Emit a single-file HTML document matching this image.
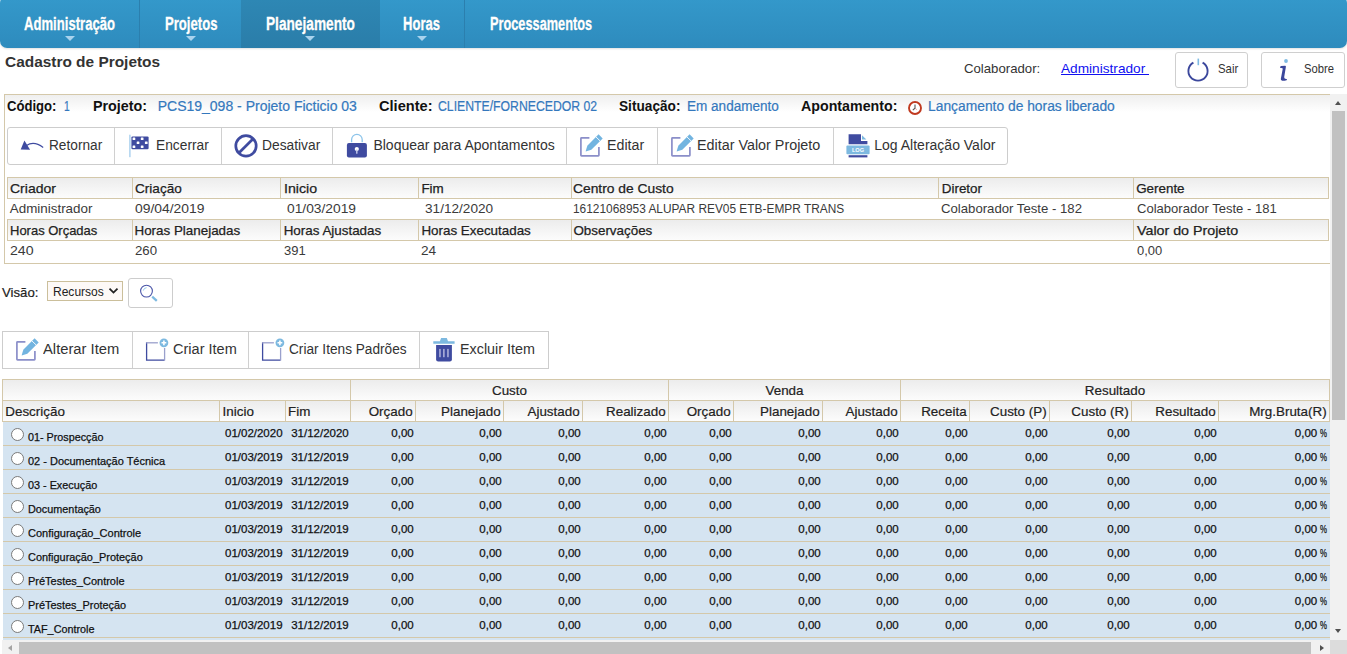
<!DOCTYPE html><html><head><meta charset="utf-8"><style>html,body{margin:0;padding:0;background:#fff;}body{width:1347px;height:654px;overflow:hidden;position:relative;font-family:"Liberation Sans",sans-serif;}</style></head><body><div style="position:absolute;left:0;top:-4px;width:1347px;height:52px;border-radius:7px;box-shadow:0 1px 2px rgba(0,0,0,.12);background:linear-gradient(#3499cb,#2e8bbd);overflow:hidden"><div style="position:absolute;left:241px;top:0;width:139px;height:56px;background:linear-gradient(#2e88b5,#2a7ca8)"></div><div style="position:absolute;left:139px;top:0;width:1px;height:56px;background:#2b7fae"></div><div style="position:absolute;left:464px;top:0;width:1px;height:56px;background:#2b7fae"></div></div>
<div style="position:absolute;left:65px;top:36px;width:0;height:0;border-left:5px solid transparent;border-right:5px solid transparent;border-top:5px solid #a9d3ee"></div>
<div style="position:absolute;left:186.4px;top:36px;width:0;height:0;border-left:5px solid transparent;border-right:5px solid transparent;border-top:5px solid #a9d3ee"></div>
<div style="position:absolute;left:304.8px;top:36px;width:0;height:0;border-left:5px solid transparent;border-right:5px solid transparent;border-top:5px solid #a9d3ee"></div>
<div style="position:absolute;left:416.8px;top:36px;width:0;height:0;border-left:5px solid transparent;border-right:5px solid transparent;border-top:5px solid #a9d3ee"></div>
<div style="position:absolute;left:1061px;top:74px;width:88px;height:1px;background:#1010f0"></div>
<div style="position:absolute;left:1175px;top:52px;width:73px;height:36px;border:1px solid #cfcfcf;border-radius:3px;box-sizing:border-box;background:#fff"></div>
<div style="position:absolute;left:1261px;top:52px;width:84px;height:36px;border:1px solid #cfcfcf;border-radius:3px;box-sizing:border-box;background:#fff"></div>
<svg style="position:absolute;left:1186px;top:57px" width="26" height="27" viewBox="0 0 26 27"><path d="M7.4 5.6 A9.6 9.6 0 1 0 16.6 5.6" fill="none" stroke="#3b479c" stroke-width="1.9"/><rect x="11.5" y="1.6" width="1.6" height="6.6" fill="#7fbbe3"/></svg>
<svg style="position:absolute;left:1274px;top:56px" width="18" height="28" viewBox="0 0 18 28"><circle cx="12" cy="5" r="1.9" fill="#7fbbe3"/><path d="M6 11.2 Q6.3 10 7 9.9 L11.1 9.7 Q12 9.9 11.9 10.8 L10.2 21 Q10.1 22.6 11.3 22.8 L13.1 23.2 L12.6 24.2 Q10 24.9 8.2 24.7 Q6.6 24.4 6.8 23 L8.8 12.4 Q7.5 11.8 6 11.8 Z" fill="#3b479c"/></svg>
<div style="position:absolute;left:4px;top:94px;width:1340px;height:170px;border:1px solid #d4c8aa;box-sizing:border-box"></div>
<div style="position:absolute;left:5px;top:95px;width:1325px;height:17px;background:linear-gradient(#efefef,#ffffff)"></div>
<svg style="position:absolute;left:906px;top:100px" width="18" height="17" viewBox="0 0 18 17"><circle cx="9" cy="8" r="6" fill="#fff" stroke="#c0391f" stroke-width="1.9"/><path d="M9 4.6 L9 8.2 L6.8 10.2" fill="none" stroke="#555" stroke-width="1.1"/><path d="M9.2 8.4 L10.8 9.6" fill="none" stroke="#e07060" stroke-width=".7"/></svg>
<div style="position:absolute;left:7px;top:127px;width:1001px;height:38px;border:1px solid #cdcdcd;border-radius:3px;box-sizing:border-box;background:#fff"></div>
<div style="position:absolute;left:114px;top:128px;width:1px;height:36px;background:#d0d0d0"></div>
<div style="position:absolute;left:221px;top:128px;width:1px;height:36px;background:#d0d0d0"></div>
<div style="position:absolute;left:332px;top:128px;width:1px;height:36px;background:#d0d0d0"></div>
<div style="position:absolute;left:566px;top:128px;width:1px;height:36px;background:#d0d0d0"></div>
<div style="position:absolute;left:657px;top:128px;width:1px;height:36px;background:#d0d0d0"></div>
<div style="position:absolute;left:833px;top:128px;width:1px;height:36px;background:#d0d0d0"></div>
<svg style="position:absolute;left:18px;top:138px" width="28" height="14" viewBox="0 0 28 14"><path d="M2.7 11.4 L6.4 2.4 L12.1 11.8 Z" fill="#3f4ba0"/><path d="M8.5 7.5 Q16 2.5 25.2 9.5" fill="none" stroke="#3f4ba0" stroke-width="1.1"/></svg>
<svg style="position:absolute;left:128px;top:134px" width="23" height="24" viewBox="0 0 23 24"><rect x="1.2" y="0.7" width="1.4" height="22.5" fill="#a9d0ee"/><rect x="3.4" y="2.4" width="17.2" height="12.8" rx="1.2" fill="#3f4ba0"/><rect x="4.6" y="3.4" width="2.7" height="2.7" rx="0.5" fill="#fff"/><rect x="12.8" y="3.4" width="2.7" height="2.7" rx="0.5" fill="#fff"/><rect x="8.7" y="7.4" width="2.7" height="2.7" rx="0.5" fill="#fff"/><rect x="16.9" y="7.4" width="2.7" height="2.7" rx="0.5" fill="#fff"/><rect x="4.6" y="11.4" width="2.7" height="2.7" rx="0.5" fill="#fff"/><rect x="12.8" y="11.4" width="2.7" height="2.7" rx="0.5" fill="#fff"/></svg>
<svg style="position:absolute;left:233px;top:133px" width="26" height="26" viewBox="0 0 26 26"><circle cx="13" cy="12.9" r="10.2" fill="none" stroke="#3f4ba0" stroke-width="2.7"/><path d="M19.9 6 L6.1 19.8" stroke="#3f4ba0" stroke-width="2.7"/></svg>
<svg style="position:absolute;left:345px;top:133px" width="24" height="26" viewBox="0 0 24 26"><path d="M6.6 9.2 L6.6 6.6 A5.3 5.3 0 0 1 17.2 6.6 L17.2 9.2" fill="none" stroke="#8cc4ea" stroke-width="1.3"/><rect x="1.9" y="9.9" width="20" height="14.7" rx="2" fill="#3f4ba0"/><circle cx="11.8" cy="16" r="2.1" fill="#fff"/><rect x="11.1" y="16.5" width="1.4" height="4.2" fill="#c5cbec"/></svg>
<svg style="position:absolute;left:575px;top:130px" width="30" height="30" viewBox="0 0 30 30"><path d="M14.4 7.9 L6.5 7.9 Q5.9 7.9 5.9 8.5 L5.9 25.3 Q5.9 25.9 6.5 25.9 L23.3 25.9 Q23.9 25.9 23.9 25.3 L23.9 17.1" fill="none" stroke="#8b8fc9" stroke-width="1.7"/><path d="M10.6 21.5 L12.3 15.7 L23.6 4.3 L27.7 8.4 L16.3 19.7 Z" fill="#72b4e0"/><path d="M20.9 6.9 L25.2 11.0" stroke="#fff" stroke-width="0.9"/></svg>
<svg style="position:absolute;left:665.5px;top:130px" width="30" height="30" viewBox="0 0 30 30"><path d="M14.4 7.9 L6.5 7.9 Q5.9 7.9 5.9 8.5 L5.9 25.3 Q5.9 25.9 6.5 25.9 L23.3 25.9 Q23.9 25.9 23.9 25.3 L23.9 17.1" fill="none" stroke="#8b8fc9" stroke-width="1.7"/><path d="M10.6 21.5 L12.3 15.7 L23.6 4.3 L27.7 8.4 L16.3 19.7 Z" fill="#72b4e0"/><path d="M20.9 6.9 L25.2 11.0" stroke="#fff" stroke-width="0.9"/></svg>
<svg style="position:absolute;left:845px;top:133px" width="26" height="26" viewBox="0 0 26 26"><path d="M3.6 1.2 L16 1.2 L16 7.9 L22.4 7.9 L22.4 11.2 L3.6 11.2 Z" fill="#3f4ba0"/><path d="M17 2.2 L21.4 6.5 L17 6.5 Z" fill="#7db9e0"/><rect x="1.4" y="12.4" width="23.2" height="8.8" rx="1" fill="#7db9e0"/><text x="13" y="19.3" font-family="Liberation Sans" font-weight="bold" font-size="5.6" fill="#fff" text-anchor="middle">LOG</text><rect x="3.6" y="22.2" width="18.8" height="2.2" fill="#3f4ba0"/></svg>
<div style="position:absolute;left:7px;top:177px;width:126px;height:22px;border:1px solid #d4c8aa;box-sizing:border-box;background:linear-gradient(#ececec,#fcfcfc)"></div>
<div style="position:absolute;left:132px;top:177px;width:149px;height:22px;border:1px solid #d4c8aa;box-sizing:border-box;background:linear-gradient(#ececec,#fcfcfc)"></div>
<div style="position:absolute;left:280px;top:177px;width:139px;height:22px;border:1px solid #d4c8aa;box-sizing:border-box;background:linear-gradient(#ececec,#fcfcfc)"></div>
<div style="position:absolute;left:418px;top:177px;width:154px;height:22px;border:1px solid #d4c8aa;box-sizing:border-box;background:linear-gradient(#ececec,#fcfcfc)"></div>
<div style="position:absolute;left:571px;top:177px;width:368px;height:22px;border:1px solid #d4c8aa;box-sizing:border-box;background:linear-gradient(#ececec,#fcfcfc)"></div>
<div style="position:absolute;left:938px;top:177px;width:196px;height:22px;border:1px solid #d4c8aa;box-sizing:border-box;background:linear-gradient(#ececec,#fcfcfc)"></div>
<div style="position:absolute;left:1133px;top:177px;width:196px;height:22px;border:1px solid #d4c8aa;box-sizing:border-box;background:linear-gradient(#ececec,#fcfcfc)"></div>
<div style="position:absolute;left:7px;top:219px;width:126px;height:22px;border:1px solid #d4c8aa;box-sizing:border-box;background:linear-gradient(#ececec,#fcfcfc)"></div>
<div style="position:absolute;left:132px;top:219px;width:149px;height:22px;border:1px solid #d4c8aa;box-sizing:border-box;background:linear-gradient(#ececec,#fcfcfc)"></div>
<div style="position:absolute;left:280px;top:219px;width:139px;height:22px;border:1px solid #d4c8aa;box-sizing:border-box;background:linear-gradient(#ececec,#fcfcfc)"></div>
<div style="position:absolute;left:418px;top:219px;width:154px;height:22px;border:1px solid #d4c8aa;box-sizing:border-box;background:linear-gradient(#ececec,#fcfcfc)"></div>
<div style="position:absolute;left:571px;top:219px;width:563px;height:22px;border:1px solid #d4c8aa;box-sizing:border-box;background:linear-gradient(#ececec,#fcfcfc)"></div>
<div style="position:absolute;left:1133px;top:219px;width:196px;height:22px;border:1px solid #d4c8aa;box-sizing:border-box;background:linear-gradient(#ececec,#fcfcfc)"></div>
<div style="position:absolute;left:47px;top:281px;width:76px;height:20px;border:1px solid #cbbf9b;box-sizing:border-box;background:#fdf9f7"></div>
<svg style="position:absolute;left:108px;top:287px" width="11" height="8" viewBox="0 0 11 8"><path d="M1.5 1.6 L5.5 5.6 L9.5 1.6" fill="none" stroke="#222" stroke-width="1.8"/></svg>
<div style="position:absolute;left:128px;top:278px;width:45px;height:30px;border:1px solid #cdcdcd;border-radius:3px;box-sizing:border-box;background:#fff"></div>
<svg style="position:absolute;left:136px;top:282px" width="26" height="24" viewBox="0 0 26 24"><circle cx="10.5" cy="9.1" r="5.9" fill="none" stroke="#4a55a8" stroke-width="1.1"/><path d="M7.3 8.6 A3.6 3.6 0 0 1 10.6 5.7" fill="none" stroke="#8cc4ea" stroke-width="0.9"/><path d="M16.2 14.6 L20.8 18.8" stroke="#7db9e0" stroke-width="2.3"/></svg>
<div style="position:absolute;left:2px;top:331px;width:547px;height:38px;border:1px solid #cdcdcd;box-sizing:border-box;background:#fff"></div>
<div style="position:absolute;left:132px;top:332px;width:1px;height:36px;background:#d0d0d0"></div>
<div style="position:absolute;left:248px;top:332px;width:1px;height:36px;background:#d0d0d0"></div>
<div style="position:absolute;left:419px;top:332px;width:1px;height:36px;background:#d0d0d0"></div>
<svg style="position:absolute;left:11px;top:334px" width="30" height="30" viewBox="0 0 30 30"><path d="M14.4 7.9 L6.5 7.9 Q5.9 7.9 5.9 8.5 L5.9 25.3 Q5.9 25.9 6.5 25.9 L23.3 25.9 Q23.9 25.9 23.9 25.3 L23.9 17.1" fill="none" stroke="#8b8fc9" stroke-width="1.7"/><path d="M10.6 21.5 L12.3 15.7 L23.6 4.3 L27.7 8.4 L16.3 19.7 Z" fill="#72b4e0"/><path d="M20.9 6.9 L25.2 11.0" stroke="#fff" stroke-width="0.9"/></svg>
<svg style="position:absolute;left:145px;top:338px" width="26" height="26" viewBox="0 0 26 26"><path d="M1.6 4.2 L1.6 22.2 L19.6 22.2" fill="none" stroke="#3f4ba0" stroke-width="1.3"/><path d="M1.0 4.8 L12.9 4.8" stroke="#9aa0cc" stroke-width="1.3"/><path d="M19.6 10 L19.6 22.5" fill="none" stroke="#9aa0cc" stroke-width="1.3"/><circle cx="18.9" cy="4.8" r="4.4" fill="#7db9e0"/><path d="M18.9 2.4 L18.9 7.2 M16.5 4.8 L21.3 4.8" stroke="#fff" stroke-width="1.6"/></svg>
<svg style="position:absolute;left:261px;top:338px" width="26" height="26" viewBox="0 0 26 26"><path d="M1.6 4.2 L1.6 22.2 L19.6 22.2" fill="none" stroke="#3f4ba0" stroke-width="1.3"/><path d="M1.0 4.8 L12.9 4.8" stroke="#9aa0cc" stroke-width="1.3"/><path d="M19.6 10 L19.6 22.5" fill="none" stroke="#9aa0cc" stroke-width="1.3"/><circle cx="18.9" cy="4.8" r="4.4" fill="#7db9e0"/><path d="M18.9 2.4 L18.9 7.2 M16.5 4.8 L21.3 4.8" stroke="#fff" stroke-width="1.6"/></svg>
<svg style="position:absolute;left:431px;top:336px" width="26" height="28" viewBox="0 0 26 28"><path d="M10.1 2.1 L15.8 2.1 L17 5.3 L23.6 5.3 L23.6 7.8 L2.3 7.8 L2.3 5.3 L8.9 5.3 Z" fill="#7db9e0"/><path d="M5.1 9 L20.9 9 L20.9 23.4 Q20.9 25.4 18.9 25.4 L7.1 25.4 Q5.1 25.4 5.1 23.4 Z" fill="#3f4ba0"/><rect x="8.1" y="12.9" width="1.7" height="8.3" fill="#a5a8d5"/><rect x="12" y="12.9" width="1.7" height="8.3" fill="#a5a8d5"/><rect x="16.1" y="12.9" width="1.7" height="8.3" fill="#a5a8d5"/></svg>
<div style="position:absolute;left:2px;top:379px;width:1328px;height:22px;border:1px solid #d4c8aa;box-sizing:border-box;background:linear-gradient(#ececec,#fcfcfc)"></div>
<div style="position:absolute;left:350px;top:379px;width:1px;height:22px;background:#d4c8aa"></div>
<div style="position:absolute;left:668px;top:379px;width:1px;height:22px;background:#d4c8aa"></div>
<div style="position:absolute;left:900px;top:379px;width:1px;height:22px;background:#d4c8aa"></div>
<div style="position:absolute;left:2px;top:400px;width:1328px;height:22px;border:1px solid #d4c8aa;box-sizing:border-box;background:linear-gradient(#ececec,#fcfcfc)"></div>
<div style="position:absolute;left:219px;top:400px;width:1px;height:22px;background:#d4c8aa"></div>
<div style="position:absolute;left:285px;top:400px;width:1px;height:22px;background:#d4c8aa"></div>
<div style="position:absolute;left:350px;top:400px;width:1px;height:22px;background:#d4c8aa"></div>
<div style="position:absolute;left:415px;top:400px;width:1px;height:22px;background:#d4c8aa"></div>
<div style="position:absolute;left:503px;top:400px;width:1px;height:22px;background:#d4c8aa"></div>
<div style="position:absolute;left:582px;top:400px;width:1px;height:22px;background:#d4c8aa"></div>
<div style="position:absolute;left:668px;top:400px;width:1px;height:22px;background:#d4c8aa"></div>
<div style="position:absolute;left:733px;top:400px;width:1px;height:22px;background:#d4c8aa"></div>
<div style="position:absolute;left:822px;top:400px;width:1px;height:22px;background:#d4c8aa"></div>
<div style="position:absolute;left:900px;top:400px;width:1px;height:22px;background:#d4c8aa"></div>
<div style="position:absolute;left:969px;top:400px;width:1px;height:22px;background:#d4c8aa"></div>
<div style="position:absolute;left:1049px;top:400px;width:1px;height:22px;background:#d4c8aa"></div>
<div style="position:absolute;left:1131px;top:400px;width:1px;height:22px;background:#d4c8aa"></div>
<div style="position:absolute;left:1218px;top:400px;width:1px;height:22px;background:#d4c8aa"></div>
<div style="position:absolute;left:3px;top:422px;width:1327px;height:218px;background:#d5e4f1"></div>
<div style="position:absolute;left:3px;top:445px;width:1327px;height:1px;background:#d4c8aa"></div>
<div style="position:absolute;left:10.5px;top:428px;width:13px;height:13px;border-radius:50%;border:1px solid #7a7a7a;box-sizing:border-box;background:#fff"></div>
<div style="position:absolute;left:3px;top:469px;width:1327px;height:1px;background:#d4c8aa"></div>
<div style="position:absolute;left:10.5px;top:452px;width:13px;height:13px;border-radius:50%;border:1px solid #7a7a7a;box-sizing:border-box;background:#fff"></div>
<div style="position:absolute;left:3px;top:493px;width:1327px;height:1px;background:#d4c8aa"></div>
<div style="position:absolute;left:10.5px;top:476px;width:13px;height:13px;border-radius:50%;border:1px solid #7a7a7a;box-sizing:border-box;background:#fff"></div>
<div style="position:absolute;left:3px;top:517px;width:1327px;height:1px;background:#d4c8aa"></div>
<div style="position:absolute;left:10.5px;top:500px;width:13px;height:13px;border-radius:50%;border:1px solid #7a7a7a;box-sizing:border-box;background:#fff"></div>
<div style="position:absolute;left:3px;top:541px;width:1327px;height:1px;background:#d4c8aa"></div>
<div style="position:absolute;left:10.5px;top:524px;width:13px;height:13px;border-radius:50%;border:1px solid #7a7a7a;box-sizing:border-box;background:#fff"></div>
<div style="position:absolute;left:3px;top:565px;width:1327px;height:1px;background:#d4c8aa"></div>
<div style="position:absolute;left:10.5px;top:548px;width:13px;height:13px;border-radius:50%;border:1px solid #7a7a7a;box-sizing:border-box;background:#fff"></div>
<div style="position:absolute;left:3px;top:589px;width:1327px;height:1px;background:#d4c8aa"></div>
<div style="position:absolute;left:10.5px;top:572px;width:13px;height:13px;border-radius:50%;border:1px solid #7a7a7a;box-sizing:border-box;background:#fff"></div>
<div style="position:absolute;left:3px;top:613px;width:1327px;height:1px;background:#d4c8aa"></div>
<div style="position:absolute;left:10.5px;top:596px;width:13px;height:13px;border-radius:50%;border:1px solid #7a7a7a;box-sizing:border-box;background:#fff"></div>
<div style="position:absolute;left:3px;top:637px;width:1327px;height:1px;background:#d4c8aa"></div>
<div style="position:absolute;left:10.5px;top:620px;width:13px;height:13px;border-radius:50%;border:1px solid #7a7a7a;box-sizing:border-box;background:#fff"></div>
<div style="position:absolute;left:1330px;top:94px;width:17px;height:546px;background:#f1f1f1"></div>
<div style="position:absolute;left:1332px;top:111px;width:13px;height:309px;background:#c1c1c1"></div>
<div style="position:absolute;left:1335px;top:101px;width:0;height:0;border-left:3.5px solid transparent;border-right:3.5px solid transparent;border-bottom:4px solid #505050"></div>
<div style="position:absolute;left:1335px;top:629px;width:0;height:0;border-left:3.5px solid transparent;border-right:3.5px solid transparent;border-top:4px solid #505050"></div>
<div style="position:absolute;left:2px;top:640px;width:1328px;height:14px;background:#f1f1f1"></div>
<div style="position:absolute;left:19px;top:642px;width:1292px;height:12px;background:#c1c1c1"></div>
<div style="position:absolute;left:8px;top:645px;width:0;height:0;border-top:3.5px solid transparent;border-bottom:3.5px solid transparent;border-right:4px solid #a3a3a3"></div>
<div style="position:absolute;left:1320px;top:645px;width:0;height:0;border-top:3.5px solid transparent;border-bottom:3.5px solid transparent;border-left:4px solid #505050"></div>
<div style="position:absolute;left:1330px;top:640px;width:17px;height:14px;background:#dcdcdc"></div>
<div style="position:absolute;top:14.56px;font-family:'Liberation Sans';font-size:18px;line-height:18px;font-weight:bold;color:#fff;white-space:pre;-webkit-text-stroke:0.35px #fff;text-shadow:0 0 1px rgba(0,0,0,.2);left:24.00px;transform:scaleX(0.7277);transform-origin:0 0;">Administração</div>
<div style="position:absolute;top:14.56px;font-family:'Liberation Sans';font-size:18px;line-height:18px;font-weight:bold;color:#fff;white-space:pre;-webkit-text-stroke:0.35px #fff;text-shadow:0 0 1px rgba(0,0,0,.2);left:164.50px;transform:scaleX(0.7289);transform-origin:0 0;">Projetos</div>
<div style="position:absolute;top:14.56px;font-family:'Liberation Sans';font-size:18px;line-height:18px;font-weight:bold;color:#fff;white-space:pre;-webkit-text-stroke:0.35px #fff;text-shadow:0 0 1px rgba(0,0,0,.2);left:265.80px;transform:scaleX(0.7595);transform-origin:0 0;">Planejamento</div>
<div style="position:absolute;top:14.56px;font-family:'Liberation Sans';font-size:18px;line-height:18px;font-weight:bold;color:#fff;white-space:pre;-webkit-text-stroke:0.35px #fff;text-shadow:0 0 1px rgba(0,0,0,.2);left:403.00px;transform:scaleX(0.7250);transform-origin:0 0;">Horas</div>
<div style="position:absolute;top:14.56px;font-family:'Liberation Sans';font-size:18px;line-height:18px;font-weight:bold;color:#fff;white-space:pre;-webkit-text-stroke:0.35px #fff;text-shadow:0 0 1px rgba(0,0,0,.2);left:489.50px;transform:scaleX(0.7086);transform-origin:0 0;">Processamentos</div>
<div style="position:absolute;top:54.30px;font-family:'Liberation Sans';font-size:15px;line-height:15px;font-weight:bold;color:#333;white-space:pre;left:4.50px;transform:scaleX(1.0280);transform-origin:0 0;">Cadastro de Projetos</div>
<div style="position:absolute;top:61.90px;font-family:'Liberation Sans';font-size:13px;line-height:13px;font-weight:normal;color:#333;white-space:pre;left:964.00px;transform:scaleX(1.0139);transform-origin:0 0;">Colaborador:</div>
<div style="position:absolute;top:61.80px;font-family:'Liberation Sans';font-size:13px;line-height:13px;font-weight:normal;color:#1010f0;white-space:pre;left:1061.00px;transform:scaleX(1.0498);transform-origin:0 0;">Administrador</div>
<div style="position:absolute;top:63.20px;font-family:'Liberation Sans';font-size:12.4px;line-height:12.4px;font-weight:normal;color:#333;white-space:pre;left:1217.60px;transform:scaleX(0.9208);transform-origin:0 0;">Sair</div>
<div style="position:absolute;top:63.20px;font-family:'Liberation Sans';font-size:12.4px;line-height:12.4px;font-weight:normal;color:#333;white-space:pre;left:1303.70px;transform:scaleX(0.9069);transform-origin:0 0;">Sobre</div>
<div style="position:absolute;top:98.95px;font-family:'Liberation Sans';font-size:14px;line-height:14px;font-weight:bold;color:#111;white-space:pre;left:7.40px;transform:scaleX(0.9343);transform-origin:0 0;">Código:</div>
<div style="position:absolute;top:98.95px;font-family:'Liberation Sans';font-size:14px;line-height:14px;font-weight:normal;color:#3478bd;white-space:pre;-webkit-text-stroke:0.2px #3478bd;left:63.50px;transform:scaleX(0.7311);transform-origin:0 0;">1</div>
<div style="position:absolute;top:98.95px;font-family:'Liberation Sans';font-size:14px;line-height:14px;font-weight:bold;color:#111;white-space:pre;left:92.90px;transform:scaleX(1.0229);transform-origin:0 0;">Projeto:</div>
<div style="position:absolute;top:98.95px;font-family:'Liberation Sans';font-size:14px;line-height:14px;font-weight:normal;color:#3478bd;white-space:pre;-webkit-text-stroke:0.2px #3478bd;left:157.70px;">PCS19_098 - Projeto Ficticio 03</div>
<div style="position:absolute;top:98.95px;font-family:'Liberation Sans';font-size:14px;line-height:14px;font-weight:bold;color:#111;white-space:pre;left:378.70px;transform:scaleX(1.0420);transform-origin:0 0;">Cliente:</div>
<div style="position:absolute;top:98.95px;font-family:'Liberation Sans';font-size:14px;line-height:14px;font-weight:normal;color:#3478bd;white-space:pre;-webkit-text-stroke:0.2px #3478bd;left:437.50px;transform:scaleX(0.8740);transform-origin:0 0;">CLIENTE/FORNECEDOR 02</div>
<div style="position:absolute;top:98.95px;font-family:'Liberation Sans';font-size:14px;line-height:14px;font-weight:bold;color:#111;white-space:pre;left:619.20px;transform:scaleX(0.9759);transform-origin:0 0;">Situação:</div>
<div style="position:absolute;top:98.95px;font-family:'Liberation Sans';font-size:14px;line-height:14px;font-weight:normal;color:#3478bd;white-space:pre;-webkit-text-stroke:0.2px #3478bd;left:687.20px;transform:scaleX(0.9678);transform-origin:0 0;">Em andamento</div>
<div style="position:absolute;top:98.95px;font-family:'Liberation Sans';font-size:14px;line-height:14px;font-weight:bold;color:#111;white-space:pre;left:800.80px;transform:scaleX(1.0159);transform-origin:0 0;">Apontamento:</div>
<div style="position:absolute;top:98.95px;font-family:'Liberation Sans';font-size:14px;line-height:14px;font-weight:normal;color:#3478bd;white-space:pre;-webkit-text-stroke:0.2px #3478bd;left:927.80px;transform:scaleX(0.9876);transform-origin:0 0;">Lançamento de horas liberado</div>
<div style="position:absolute;top:138.45px;font-family:'Liberation Sans';font-size:14px;line-height:14px;font-weight:normal;color:#333;white-space:pre;left:48.50px;transform:scaleX(0.9767);transform-origin:0 0;">Retornar</div>
<div style="position:absolute;top:138.45px;font-family:'Liberation Sans';font-size:14px;line-height:14px;font-weight:normal;color:#333;white-space:pre;left:155.70px;transform:scaleX(0.9835);transform-origin:0 0;">Encerrar</div>
<div style="position:absolute;top:138.45px;font-family:'Liberation Sans';font-size:14px;line-height:14px;font-weight:normal;color:#333;white-space:pre;left:261.70px;transform:scaleX(0.9858);transform-origin:0 0;">Desativar</div>
<div style="position:absolute;top:138.45px;font-family:'Liberation Sans';font-size:14px;line-height:14px;font-weight:normal;color:#333;white-space:pre;left:373.40px;">Bloquear para Apontamentos</div>
<div style="position:absolute;top:138.45px;font-family:'Liberation Sans';font-size:14px;line-height:14px;font-weight:normal;color:#333;white-space:pre;left:607.00px;transform:scaleX(1.0170);transform-origin:0 0;">Editar</div>
<div style="position:absolute;top:138.45px;font-family:'Liberation Sans';font-size:14px;line-height:14px;font-weight:normal;color:#333;white-space:pre;left:697.40px;transform:scaleX(1.0244);transform-origin:0 0;">Editar Valor Projeto</div>
<div style="position:absolute;top:138.45px;font-family:'Liberation Sans';font-size:14px;line-height:14px;font-weight:normal;color:#333;white-space:pre;left:874.30px;">Log Alteração Valor</div>
<div style="position:absolute;top:181.66px;font-family:'Liberation Sans';font-size:13.4px;line-height:13.4px;font-weight:normal;color:#222;white-space:pre;-webkit-text-stroke:0.25px #222;left:9.80px;transform:scaleX(1.0454);transform-origin:0 0;">Criador</div>
<div style="position:absolute;top:181.66px;font-family:'Liberation Sans';font-size:13.4px;line-height:13.4px;font-weight:normal;color:#222;white-space:pre;-webkit-text-stroke:0.25px #222;left:134.50px;transform:scaleX(1.0139);transform-origin:0 0;">Criação</div>
<div style="position:absolute;top:181.66px;font-family:'Liberation Sans';font-size:13.4px;line-height:13.4px;font-weight:normal;color:#222;white-space:pre;-webkit-text-stroke:0.25px #222;left:283.70px;transform:scaleX(1.0587);transform-origin:0 0;">Inicio</div>
<div style="position:absolute;top:181.66px;font-family:'Liberation Sans';font-size:13.4px;line-height:13.4px;font-weight:normal;color:#222;white-space:pre;-webkit-text-stroke:0.25px #222;left:421.40px;">Fim</div>
<div style="position:absolute;top:181.66px;font-family:'Liberation Sans';font-size:13.4px;line-height:13.4px;font-weight:normal;color:#222;white-space:pre;-webkit-text-stroke:0.25px #222;left:573.40px;transform:scaleX(1.0316);transform-origin:0 0;">Centro de Custo</div>
<div style="position:absolute;top:181.66px;font-family:'Liberation Sans';font-size:13.4px;line-height:13.4px;font-weight:normal;color:#222;white-space:pre;-webkit-text-stroke:0.25px #222;left:941.80px;">Diretor</div>
<div style="position:absolute;top:181.66px;font-family:'Liberation Sans';font-size:13.4px;line-height:13.4px;font-weight:normal;color:#222;white-space:pre;-webkit-text-stroke:0.25px #222;left:1136.20px;">Gerente</div>
<div style="position:absolute;top:202.36px;font-family:'Liberation Sans';font-size:13.4px;line-height:13.4px;font-weight:normal;color:#3a3a3a;white-space:pre;left:9.80px;">Administrador</div>
<div style="position:absolute;top:202.36px;font-family:'Liberation Sans';font-size:13.4px;line-height:13.4px;font-weight:normal;color:#3a3a3a;white-space:pre;left:134.50px;transform:scaleX(1.0368);transform-origin:0 0;">09/04/2019</div>
<div style="position:absolute;top:202.36px;font-family:'Liberation Sans';font-size:13.4px;line-height:13.4px;font-weight:normal;color:#3a3a3a;white-space:pre;left:287.30px;transform:scaleX(1.0294);transform-origin:0 0;">01/03/2019</div>
<div style="position:absolute;top:202.36px;font-family:'Liberation Sans';font-size:13.4px;line-height:13.4px;font-weight:normal;color:#3a3a3a;white-space:pre;left:425.40px;transform:scaleX(1.0159);transform-origin:0 0;">31/12/2020</div>
<div style="position:absolute;top:202.36px;font-family:'Liberation Sans';font-size:13.4px;line-height:13.4px;font-weight:normal;color:#3a3a3a;white-space:pre;left:573.40px;transform:scaleX(0.8880);transform-origin:0 0;">16121068953 ALUPAR REV05 ETB-EMPR TRANS</div>
<div style="position:absolute;top:202.36px;font-family:'Liberation Sans';font-size:13.4px;line-height:13.4px;font-weight:normal;color:#3a3a3a;white-space:pre;left:941.00px;transform:scaleX(0.9831);transform-origin:0 0;">Colaborador Teste - 182</div>
<div style="position:absolute;top:202.36px;font-family:'Liberation Sans';font-size:13.4px;line-height:13.4px;font-weight:normal;color:#3a3a3a;white-space:pre;left:1136.80px;transform:scaleX(0.9740);transform-origin:0 0;">Colaborador Teste - 181</div>
<div style="position:absolute;top:223.66px;font-family:'Liberation Sans';font-size:13.4px;line-height:13.4px;font-weight:normal;color:#222;white-space:pre;-webkit-text-stroke:0.25px #222;left:9.80px;transform:scaleX(0.9695);transform-origin:0 0;">Horas Orçadas</div>
<div style="position:absolute;top:223.66px;font-family:'Liberation Sans';font-size:13.4px;line-height:13.4px;font-weight:normal;color:#222;white-space:pre;-webkit-text-stroke:0.25px #222;left:134.50px;">Horas Planejadas</div>
<div style="position:absolute;top:223.66px;font-family:'Liberation Sans';font-size:13.4px;line-height:13.4px;font-weight:normal;color:#222;white-space:pre;-webkit-text-stroke:0.25px #222;left:283.70px;">Horas Ajustadas</div>
<div style="position:absolute;top:223.66px;font-family:'Liberation Sans';font-size:13.4px;line-height:13.4px;font-weight:normal;color:#222;white-space:pre;-webkit-text-stroke:0.25px #222;left:421.40px;">Horas Executadas</div>
<div style="position:absolute;top:223.66px;font-family:'Liberation Sans';font-size:13.4px;line-height:13.4px;font-weight:normal;color:#222;white-space:pre;-webkit-text-stroke:0.25px #222;left:573.40px;">Observações</div>
<div style="position:absolute;top:223.66px;font-family:'Liberation Sans';font-size:13.4px;line-height:13.4px;font-weight:normal;color:#222;white-space:pre;-webkit-text-stroke:0.25px #222;left:1136.80px;transform:scaleX(1.0649);transform-origin:0 0;">Valor do Projeto</div>
<div style="position:absolute;top:243.66px;font-family:'Liberation Sans';font-size:13.4px;line-height:13.4px;font-weight:normal;color:#3a3a3a;white-space:pre;left:9.80px;transform:scaleX(1.0562);transform-origin:0 0;">240</div>
<div style="position:absolute;top:243.66px;font-family:'Liberation Sans';font-size:13.4px;line-height:13.4px;font-weight:normal;color:#3a3a3a;white-space:pre;left:134.50px;transform:scaleX(0.9891);transform-origin:0 0;">260</div>
<div style="position:absolute;top:243.66px;font-family:'Liberation Sans';font-size:13.4px;line-height:13.4px;font-weight:normal;color:#3a3a3a;white-space:pre;left:283.70px;transform:scaleX(0.9712);transform-origin:0 0;">391</div>
<div style="position:absolute;top:243.66px;font-family:'Liberation Sans';font-size:13.4px;line-height:13.4px;font-weight:normal;color:#3a3a3a;white-space:pre;left:421.40px;transform:scaleX(1.0197);transform-origin:0 0;">24</div>
<div style="position:absolute;top:243.66px;font-family:'Liberation Sans';font-size:13.4px;line-height:13.4px;font-weight:normal;color:#3a3a3a;white-space:pre;left:1136.80px;transform:scaleX(0.9669);transform-origin:0 0;">0,00</div>
<div style="position:absolute;top:285.90px;font-family:'Liberation Sans';font-size:13px;line-height:13px;font-weight:normal;color:#222;white-space:pre;-webkit-text-stroke:0.2px #222;left:2.00px;transform:scaleX(1.0138);transform-origin:0 0;">Visão:</div>
<div style="position:absolute;top:285.20px;font-family:'Liberation Sans';font-size:13px;line-height:13px;font-weight:normal;color:#222;white-space:pre;left:52.80px;transform:scaleX(0.9250);transform-origin:0 0;">Recursos</div>
<div style="position:absolute;top:342.25px;font-family:'Liberation Sans';font-size:14px;line-height:14px;font-weight:normal;color:#333;white-space:pre;left:43.20px;transform:scaleX(1.0545);transform-origin:0 0;">Alterar Item</div>
<div style="position:absolute;top:342.25px;font-family:'Liberation Sans';font-size:14px;line-height:14px;font-weight:normal;color:#333;white-space:pre;left:172.60px;transform:scaleX(1.0382);transform-origin:0 0;">Criar Item</div>
<div style="position:absolute;top:342.25px;font-family:'Liberation Sans';font-size:14px;line-height:14px;font-weight:normal;color:#333;white-space:pre;left:289.40px;transform:scaleX(0.9750);transform-origin:0 0;">Criar Itens Padrões</div>
<div style="position:absolute;top:342.25px;font-family:'Liberation Sans';font-size:14px;line-height:14px;font-weight:normal;color:#333;white-space:pre;left:460.40px;transform:scaleX(1.0243);transform-origin:0 0;">Excluir Item</div>
<div style="position:absolute;top:383.56px;font-family:'Liberation Sans';font-size:13.4px;line-height:13.4px;font-weight:normal;color:#222;white-space:pre;-webkit-text-stroke:0.2px #222;left:209.50px;width:600px;text-align:center;">Custo</div>
<div style="position:absolute;top:383.56px;font-family:'Liberation Sans';font-size:13.4px;line-height:13.4px;font-weight:normal;color:#222;white-space:pre;-webkit-text-stroke:0.2px #222;left:484.50px;width:600px;text-align:center;">Venda</div>
<div style="position:absolute;top:383.56px;font-family:'Liberation Sans';font-size:13.4px;line-height:13.4px;font-weight:normal;color:#222;white-space:pre;-webkit-text-stroke:0.2px #222;left:815.00px;width:600px;text-align:center;">Resultado</div>
<div style="position:absolute;top:404.56px;font-family:'Liberation Sans';font-size:13.4px;line-height:13.4px;font-weight:normal;color:#222;white-space:pre;-webkit-text-stroke:0.2px #222;left:5.30px;">Descrição</div>
<div style="position:absolute;top:404.56px;font-family:'Liberation Sans';font-size:13.4px;line-height:13.4px;font-weight:normal;color:#222;white-space:pre;-webkit-text-stroke:0.2px #222;left:222.60px;">Inicio</div>
<div style="position:absolute;top:404.56px;font-family:'Liberation Sans';font-size:13.4px;line-height:13.4px;font-weight:normal;color:#222;white-space:pre;-webkit-text-stroke:0.2px #222;left:288.00px;">Fim</div>
<div style="position:absolute;top:404.56px;font-family:'Liberation Sans';font-size:13.4px;line-height:13.4px;font-weight:normal;color:#222;white-space:pre;-webkit-text-stroke:0.2px #222;right:934.40px;">Orçado</div>
<div style="position:absolute;top:404.56px;font-family:'Liberation Sans';font-size:13.4px;line-height:13.4px;font-weight:normal;color:#222;white-space:pre;-webkit-text-stroke:0.2px #222;right:846.40px;">Planejado</div>
<div style="position:absolute;top:404.56px;font-family:'Liberation Sans';font-size:13.4px;line-height:13.4px;font-weight:normal;color:#222;white-space:pre;-webkit-text-stroke:0.2px #222;right:767.40px;">Ajustado</div>
<div style="position:absolute;top:404.56px;font-family:'Liberation Sans';font-size:13.4px;line-height:13.4px;font-weight:normal;color:#222;white-space:pre;-webkit-text-stroke:0.2px #222;right:681.40px;">Realizado</div>
<div style="position:absolute;top:404.56px;font-family:'Liberation Sans';font-size:13.4px;line-height:13.4px;font-weight:normal;color:#222;white-space:pre;-webkit-text-stroke:0.2px #222;right:616.40px;">Orçado</div>
<div style="position:absolute;top:404.56px;font-family:'Liberation Sans';font-size:13.4px;line-height:13.4px;font-weight:normal;color:#222;white-space:pre;-webkit-text-stroke:0.2px #222;right:527.40px;">Planejado</div>
<div style="position:absolute;top:404.56px;font-family:'Liberation Sans';font-size:13.4px;line-height:13.4px;font-weight:normal;color:#222;white-space:pre;-webkit-text-stroke:0.2px #222;right:449.40px;">Ajustado</div>
<div style="position:absolute;top:404.56px;font-family:'Liberation Sans';font-size:13.4px;line-height:13.4px;font-weight:normal;color:#222;white-space:pre;-webkit-text-stroke:0.2px #222;right:380.40px;">Receita</div>
<div style="position:absolute;top:404.56px;font-family:'Liberation Sans';font-size:13.4px;line-height:13.4px;font-weight:normal;color:#222;white-space:pre;-webkit-text-stroke:0.2px #222;right:300.40px;">Custo (P)</div>
<div style="position:absolute;top:404.56px;font-family:'Liberation Sans';font-size:13.4px;line-height:13.4px;font-weight:normal;color:#222;white-space:pre;-webkit-text-stroke:0.2px #222;right:218.40px;">Custo (R)</div>
<div style="position:absolute;top:404.56px;font-family:'Liberation Sans';font-size:13.4px;line-height:13.4px;font-weight:normal;color:#222;white-space:pre;-webkit-text-stroke:0.2px #222;right:131.40px;">Resultado</div>
<div style="position:absolute;top:404.56px;font-family:'Liberation Sans';font-size:13.4px;line-height:13.4px;font-weight:normal;color:#222;white-space:pre;-webkit-text-stroke:0.2px #222;right:20.40px;">Mrg.Bruta(R)</div>
<div style="position:absolute;top:432.12px;font-family:'Liberation Sans';font-size:11.2px;line-height:11.2px;font-weight:normal;color:#111;white-space:pre;-webkit-text-stroke:0.25px #111;left:27.70px;transform:scaleX(0.9622);transform-origin:0 0;">01- Prospecção</div>
<div style="position:absolute;top:427.87px;font-family:'Liberation Sans';font-size:11.5px;line-height:11.5px;font-weight:normal;color:#111;white-space:pre;-webkit-text-stroke:0.25px #111;left:225.00px;">01/02/2020</div>
<div style="position:absolute;top:427.87px;font-family:'Liberation Sans';font-size:11.5px;line-height:11.5px;font-weight:normal;color:#111;white-space:pre;-webkit-text-stroke:0.25px #111;left:291.20px;">31/12/2020</div>
<div style="position:absolute;top:427.87px;font-family:'Liberation Sans';font-size:11.5px;line-height:11.5px;font-weight:normal;color:#111;white-space:pre;-webkit-text-stroke:0.25px #111;right:933.30px;">0,00</div>
<div style="position:absolute;top:427.87px;font-family:'Liberation Sans';font-size:11.5px;line-height:11.5px;font-weight:normal;color:#111;white-space:pre;-webkit-text-stroke:0.25px #111;right:845.30px;">0,00</div>
<div style="position:absolute;top:427.87px;font-family:'Liberation Sans';font-size:11.5px;line-height:11.5px;font-weight:normal;color:#111;white-space:pre;-webkit-text-stroke:0.25px #111;right:766.30px;">0,00</div>
<div style="position:absolute;top:427.87px;font-family:'Liberation Sans';font-size:11.5px;line-height:11.5px;font-weight:normal;color:#111;white-space:pre;-webkit-text-stroke:0.25px #111;right:680.30px;">0,00</div>
<div style="position:absolute;top:427.87px;font-family:'Liberation Sans';font-size:11.5px;line-height:11.5px;font-weight:normal;color:#111;white-space:pre;-webkit-text-stroke:0.25px #111;right:615.30px;">0,00</div>
<div style="position:absolute;top:427.87px;font-family:'Liberation Sans';font-size:11.5px;line-height:11.5px;font-weight:normal;color:#111;white-space:pre;-webkit-text-stroke:0.25px #111;right:526.30px;">0,00</div>
<div style="position:absolute;top:427.87px;font-family:'Liberation Sans';font-size:11.5px;line-height:11.5px;font-weight:normal;color:#111;white-space:pre;-webkit-text-stroke:0.25px #111;right:448.30px;">0,00</div>
<div style="position:absolute;top:427.87px;font-family:'Liberation Sans';font-size:11.5px;line-height:11.5px;font-weight:normal;color:#111;white-space:pre;-webkit-text-stroke:0.25px #111;right:379.30px;">0,00</div>
<div style="position:absolute;top:427.87px;font-family:'Liberation Sans';font-size:11.5px;line-height:11.5px;font-weight:normal;color:#111;white-space:pre;-webkit-text-stroke:0.25px #111;right:299.30px;">0,00</div>
<div style="position:absolute;top:427.87px;font-family:'Liberation Sans';font-size:11.5px;line-height:11.5px;font-weight:normal;color:#111;white-space:pre;-webkit-text-stroke:0.25px #111;right:217.30px;">0,00</div>
<div style="position:absolute;top:427.87px;font-family:'Liberation Sans';font-size:11.5px;line-height:11.5px;font-weight:normal;color:#111;white-space:pre;-webkit-text-stroke:0.25px #111;right:130.30px;">0,00</div>
<div style="position:absolute;top:427.87px;font-family:'Liberation Sans';font-size:11.5px;line-height:11.5px;font-weight:normal;color:#111;white-space:pre;-webkit-text-stroke:0.25px #111;right:29.80px;">0,00</div>
<div style="position:absolute;top:427.87px;font-family:'Liberation Sans';font-size:11.5px;line-height:11.5px;font-weight:normal;color:#111;white-space:pre;-webkit-text-stroke:0.25px #111;left:1320.30px;transform:scaleX(0.6840);transform-origin:0 0;">%</div>
<div style="position:absolute;top:456.12px;font-family:'Liberation Sans';font-size:11.2px;line-height:11.2px;font-weight:normal;color:#111;white-space:pre;-webkit-text-stroke:0.25px #111;left:27.70px;transform:scaleX(0.9813);transform-origin:0 0;">02 - Documentação Técnica</div>
<div style="position:absolute;top:451.87px;font-family:'Liberation Sans';font-size:11.5px;line-height:11.5px;font-weight:normal;color:#111;white-space:pre;-webkit-text-stroke:0.25px #111;left:225.00px;">01/03/2019</div>
<div style="position:absolute;top:451.87px;font-family:'Liberation Sans';font-size:11.5px;line-height:11.5px;font-weight:normal;color:#111;white-space:pre;-webkit-text-stroke:0.25px #111;left:291.20px;">31/12/2019</div>
<div style="position:absolute;top:451.87px;font-family:'Liberation Sans';font-size:11.5px;line-height:11.5px;font-weight:normal;color:#111;white-space:pre;-webkit-text-stroke:0.25px #111;right:933.30px;">0,00</div>
<div style="position:absolute;top:451.87px;font-family:'Liberation Sans';font-size:11.5px;line-height:11.5px;font-weight:normal;color:#111;white-space:pre;-webkit-text-stroke:0.25px #111;right:845.30px;">0,00</div>
<div style="position:absolute;top:451.87px;font-family:'Liberation Sans';font-size:11.5px;line-height:11.5px;font-weight:normal;color:#111;white-space:pre;-webkit-text-stroke:0.25px #111;right:766.30px;">0,00</div>
<div style="position:absolute;top:451.87px;font-family:'Liberation Sans';font-size:11.5px;line-height:11.5px;font-weight:normal;color:#111;white-space:pre;-webkit-text-stroke:0.25px #111;right:680.30px;">0,00</div>
<div style="position:absolute;top:451.87px;font-family:'Liberation Sans';font-size:11.5px;line-height:11.5px;font-weight:normal;color:#111;white-space:pre;-webkit-text-stroke:0.25px #111;right:615.30px;">0,00</div>
<div style="position:absolute;top:451.87px;font-family:'Liberation Sans';font-size:11.5px;line-height:11.5px;font-weight:normal;color:#111;white-space:pre;-webkit-text-stroke:0.25px #111;right:526.30px;">0,00</div>
<div style="position:absolute;top:451.87px;font-family:'Liberation Sans';font-size:11.5px;line-height:11.5px;font-weight:normal;color:#111;white-space:pre;-webkit-text-stroke:0.25px #111;right:448.30px;">0,00</div>
<div style="position:absolute;top:451.87px;font-family:'Liberation Sans';font-size:11.5px;line-height:11.5px;font-weight:normal;color:#111;white-space:pre;-webkit-text-stroke:0.25px #111;right:379.30px;">0,00</div>
<div style="position:absolute;top:451.87px;font-family:'Liberation Sans';font-size:11.5px;line-height:11.5px;font-weight:normal;color:#111;white-space:pre;-webkit-text-stroke:0.25px #111;right:299.30px;">0,00</div>
<div style="position:absolute;top:451.87px;font-family:'Liberation Sans';font-size:11.5px;line-height:11.5px;font-weight:normal;color:#111;white-space:pre;-webkit-text-stroke:0.25px #111;right:217.30px;">0,00</div>
<div style="position:absolute;top:451.87px;font-family:'Liberation Sans';font-size:11.5px;line-height:11.5px;font-weight:normal;color:#111;white-space:pre;-webkit-text-stroke:0.25px #111;right:130.30px;">0,00</div>
<div style="position:absolute;top:451.87px;font-family:'Liberation Sans';font-size:11.5px;line-height:11.5px;font-weight:normal;color:#111;white-space:pre;-webkit-text-stroke:0.25px #111;right:29.80px;">0,00</div>
<div style="position:absolute;top:451.87px;font-family:'Liberation Sans';font-size:11.5px;line-height:11.5px;font-weight:normal;color:#111;white-space:pre;-webkit-text-stroke:0.25px #111;left:1320.30px;transform:scaleX(0.6840);transform-origin:0 0;">%</div>
<div style="position:absolute;top:480.12px;font-family:'Liberation Sans';font-size:11.2px;line-height:11.2px;font-weight:normal;color:#111;white-space:pre;-webkit-text-stroke:0.25px #111;left:27.70px;transform:scaleX(0.9674);transform-origin:0 0;">03 - Execução</div>
<div style="position:absolute;top:475.87px;font-family:'Liberation Sans';font-size:11.5px;line-height:11.5px;font-weight:normal;color:#111;white-space:pre;-webkit-text-stroke:0.25px #111;left:225.00px;">01/03/2019</div>
<div style="position:absolute;top:475.87px;font-family:'Liberation Sans';font-size:11.5px;line-height:11.5px;font-weight:normal;color:#111;white-space:pre;-webkit-text-stroke:0.25px #111;left:291.20px;">31/12/2019</div>
<div style="position:absolute;top:475.87px;font-family:'Liberation Sans';font-size:11.5px;line-height:11.5px;font-weight:normal;color:#111;white-space:pre;-webkit-text-stroke:0.25px #111;right:933.30px;">0,00</div>
<div style="position:absolute;top:475.87px;font-family:'Liberation Sans';font-size:11.5px;line-height:11.5px;font-weight:normal;color:#111;white-space:pre;-webkit-text-stroke:0.25px #111;right:845.30px;">0,00</div>
<div style="position:absolute;top:475.87px;font-family:'Liberation Sans';font-size:11.5px;line-height:11.5px;font-weight:normal;color:#111;white-space:pre;-webkit-text-stroke:0.25px #111;right:766.30px;">0,00</div>
<div style="position:absolute;top:475.87px;font-family:'Liberation Sans';font-size:11.5px;line-height:11.5px;font-weight:normal;color:#111;white-space:pre;-webkit-text-stroke:0.25px #111;right:680.30px;">0,00</div>
<div style="position:absolute;top:475.87px;font-family:'Liberation Sans';font-size:11.5px;line-height:11.5px;font-weight:normal;color:#111;white-space:pre;-webkit-text-stroke:0.25px #111;right:615.30px;">0,00</div>
<div style="position:absolute;top:475.87px;font-family:'Liberation Sans';font-size:11.5px;line-height:11.5px;font-weight:normal;color:#111;white-space:pre;-webkit-text-stroke:0.25px #111;right:526.30px;">0,00</div>
<div style="position:absolute;top:475.87px;font-family:'Liberation Sans';font-size:11.5px;line-height:11.5px;font-weight:normal;color:#111;white-space:pre;-webkit-text-stroke:0.25px #111;right:448.30px;">0,00</div>
<div style="position:absolute;top:475.87px;font-family:'Liberation Sans';font-size:11.5px;line-height:11.5px;font-weight:normal;color:#111;white-space:pre;-webkit-text-stroke:0.25px #111;right:379.30px;">0,00</div>
<div style="position:absolute;top:475.87px;font-family:'Liberation Sans';font-size:11.5px;line-height:11.5px;font-weight:normal;color:#111;white-space:pre;-webkit-text-stroke:0.25px #111;right:299.30px;">0,00</div>
<div style="position:absolute;top:475.87px;font-family:'Liberation Sans';font-size:11.5px;line-height:11.5px;font-weight:normal;color:#111;white-space:pre;-webkit-text-stroke:0.25px #111;right:217.30px;">0,00</div>
<div style="position:absolute;top:475.87px;font-family:'Liberation Sans';font-size:11.5px;line-height:11.5px;font-weight:normal;color:#111;white-space:pre;-webkit-text-stroke:0.25px #111;right:130.30px;">0,00</div>
<div style="position:absolute;top:475.87px;font-family:'Liberation Sans';font-size:11.5px;line-height:11.5px;font-weight:normal;color:#111;white-space:pre;-webkit-text-stroke:0.25px #111;right:29.80px;">0,00</div>
<div style="position:absolute;top:475.87px;font-family:'Liberation Sans';font-size:11.5px;line-height:11.5px;font-weight:normal;color:#111;white-space:pre;-webkit-text-stroke:0.25px #111;left:1320.30px;transform:scaleX(0.6840);transform-origin:0 0;">%</div>
<div style="position:absolute;top:504.12px;font-family:'Liberation Sans';font-size:11.2px;line-height:11.2px;font-weight:normal;color:#111;white-space:pre;-webkit-text-stroke:0.25px #111;left:27.70px;transform:scaleX(0.9688);transform-origin:0 0;">Documentação</div>
<div style="position:absolute;top:499.87px;font-family:'Liberation Sans';font-size:11.5px;line-height:11.5px;font-weight:normal;color:#111;white-space:pre;-webkit-text-stroke:0.25px #111;left:225.00px;">01/03/2019</div>
<div style="position:absolute;top:499.87px;font-family:'Liberation Sans';font-size:11.5px;line-height:11.5px;font-weight:normal;color:#111;white-space:pre;-webkit-text-stroke:0.25px #111;left:291.20px;">31/12/2019</div>
<div style="position:absolute;top:499.87px;font-family:'Liberation Sans';font-size:11.5px;line-height:11.5px;font-weight:normal;color:#111;white-space:pre;-webkit-text-stroke:0.25px #111;right:933.30px;">0,00</div>
<div style="position:absolute;top:499.87px;font-family:'Liberation Sans';font-size:11.5px;line-height:11.5px;font-weight:normal;color:#111;white-space:pre;-webkit-text-stroke:0.25px #111;right:845.30px;">0,00</div>
<div style="position:absolute;top:499.87px;font-family:'Liberation Sans';font-size:11.5px;line-height:11.5px;font-weight:normal;color:#111;white-space:pre;-webkit-text-stroke:0.25px #111;right:766.30px;">0,00</div>
<div style="position:absolute;top:499.87px;font-family:'Liberation Sans';font-size:11.5px;line-height:11.5px;font-weight:normal;color:#111;white-space:pre;-webkit-text-stroke:0.25px #111;right:680.30px;">0,00</div>
<div style="position:absolute;top:499.87px;font-family:'Liberation Sans';font-size:11.5px;line-height:11.5px;font-weight:normal;color:#111;white-space:pre;-webkit-text-stroke:0.25px #111;right:615.30px;">0,00</div>
<div style="position:absolute;top:499.87px;font-family:'Liberation Sans';font-size:11.5px;line-height:11.5px;font-weight:normal;color:#111;white-space:pre;-webkit-text-stroke:0.25px #111;right:526.30px;">0,00</div>
<div style="position:absolute;top:499.87px;font-family:'Liberation Sans';font-size:11.5px;line-height:11.5px;font-weight:normal;color:#111;white-space:pre;-webkit-text-stroke:0.25px #111;right:448.30px;">0,00</div>
<div style="position:absolute;top:499.87px;font-family:'Liberation Sans';font-size:11.5px;line-height:11.5px;font-weight:normal;color:#111;white-space:pre;-webkit-text-stroke:0.25px #111;right:379.30px;">0,00</div>
<div style="position:absolute;top:499.87px;font-family:'Liberation Sans';font-size:11.5px;line-height:11.5px;font-weight:normal;color:#111;white-space:pre;-webkit-text-stroke:0.25px #111;right:299.30px;">0,00</div>
<div style="position:absolute;top:499.87px;font-family:'Liberation Sans';font-size:11.5px;line-height:11.5px;font-weight:normal;color:#111;white-space:pre;-webkit-text-stroke:0.25px #111;right:217.30px;">0,00</div>
<div style="position:absolute;top:499.87px;font-family:'Liberation Sans';font-size:11.5px;line-height:11.5px;font-weight:normal;color:#111;white-space:pre;-webkit-text-stroke:0.25px #111;right:130.30px;">0,00</div>
<div style="position:absolute;top:499.87px;font-family:'Liberation Sans';font-size:11.5px;line-height:11.5px;font-weight:normal;color:#111;white-space:pre;-webkit-text-stroke:0.25px #111;right:29.80px;">0,00</div>
<div style="position:absolute;top:499.87px;font-family:'Liberation Sans';font-size:11.5px;line-height:11.5px;font-weight:normal;color:#111;white-space:pre;-webkit-text-stroke:0.25px #111;left:1320.30px;transform:scaleX(0.6840);transform-origin:0 0;">%</div>
<div style="position:absolute;top:528.12px;font-family:'Liberation Sans';font-size:11.2px;line-height:11.2px;font-weight:normal;color:#111;white-space:pre;-webkit-text-stroke:0.25px #111;left:27.70px;transform:scaleX(0.9838);transform-origin:0 0;">Configuração_Controle</div>
<div style="position:absolute;top:523.87px;font-family:'Liberation Sans';font-size:11.5px;line-height:11.5px;font-weight:normal;color:#111;white-space:pre;-webkit-text-stroke:0.25px #111;left:225.00px;">01/03/2019</div>
<div style="position:absolute;top:523.87px;font-family:'Liberation Sans';font-size:11.5px;line-height:11.5px;font-weight:normal;color:#111;white-space:pre;-webkit-text-stroke:0.25px #111;left:291.20px;">31/12/2019</div>
<div style="position:absolute;top:523.87px;font-family:'Liberation Sans';font-size:11.5px;line-height:11.5px;font-weight:normal;color:#111;white-space:pre;-webkit-text-stroke:0.25px #111;right:933.30px;">0,00</div>
<div style="position:absolute;top:523.87px;font-family:'Liberation Sans';font-size:11.5px;line-height:11.5px;font-weight:normal;color:#111;white-space:pre;-webkit-text-stroke:0.25px #111;right:845.30px;">0,00</div>
<div style="position:absolute;top:523.87px;font-family:'Liberation Sans';font-size:11.5px;line-height:11.5px;font-weight:normal;color:#111;white-space:pre;-webkit-text-stroke:0.25px #111;right:766.30px;">0,00</div>
<div style="position:absolute;top:523.87px;font-family:'Liberation Sans';font-size:11.5px;line-height:11.5px;font-weight:normal;color:#111;white-space:pre;-webkit-text-stroke:0.25px #111;right:680.30px;">0,00</div>
<div style="position:absolute;top:523.87px;font-family:'Liberation Sans';font-size:11.5px;line-height:11.5px;font-weight:normal;color:#111;white-space:pre;-webkit-text-stroke:0.25px #111;right:615.30px;">0,00</div>
<div style="position:absolute;top:523.87px;font-family:'Liberation Sans';font-size:11.5px;line-height:11.5px;font-weight:normal;color:#111;white-space:pre;-webkit-text-stroke:0.25px #111;right:526.30px;">0,00</div>
<div style="position:absolute;top:523.87px;font-family:'Liberation Sans';font-size:11.5px;line-height:11.5px;font-weight:normal;color:#111;white-space:pre;-webkit-text-stroke:0.25px #111;right:448.30px;">0,00</div>
<div style="position:absolute;top:523.87px;font-family:'Liberation Sans';font-size:11.5px;line-height:11.5px;font-weight:normal;color:#111;white-space:pre;-webkit-text-stroke:0.25px #111;right:379.30px;">0,00</div>
<div style="position:absolute;top:523.87px;font-family:'Liberation Sans';font-size:11.5px;line-height:11.5px;font-weight:normal;color:#111;white-space:pre;-webkit-text-stroke:0.25px #111;right:299.30px;">0,00</div>
<div style="position:absolute;top:523.87px;font-family:'Liberation Sans';font-size:11.5px;line-height:11.5px;font-weight:normal;color:#111;white-space:pre;-webkit-text-stroke:0.25px #111;right:217.30px;">0,00</div>
<div style="position:absolute;top:523.87px;font-family:'Liberation Sans';font-size:11.5px;line-height:11.5px;font-weight:normal;color:#111;white-space:pre;-webkit-text-stroke:0.25px #111;right:130.30px;">0,00</div>
<div style="position:absolute;top:523.87px;font-family:'Liberation Sans';font-size:11.5px;line-height:11.5px;font-weight:normal;color:#111;white-space:pre;-webkit-text-stroke:0.25px #111;right:29.80px;">0,00</div>
<div style="position:absolute;top:523.87px;font-family:'Liberation Sans';font-size:11.5px;line-height:11.5px;font-weight:normal;color:#111;white-space:pre;-webkit-text-stroke:0.25px #111;left:1320.30px;transform:scaleX(0.6840);transform-origin:0 0;">%</div>
<div style="position:absolute;top:552.12px;font-family:'Liberation Sans';font-size:11.2px;line-height:11.2px;font-weight:normal;color:#111;white-space:pre;-webkit-text-stroke:0.25px #111;left:27.70px;transform:scaleX(0.9758);transform-origin:0 0;">Configuração_Proteção</div>
<div style="position:absolute;top:547.87px;font-family:'Liberation Sans';font-size:11.5px;line-height:11.5px;font-weight:normal;color:#111;white-space:pre;-webkit-text-stroke:0.25px #111;left:225.00px;">01/03/2019</div>
<div style="position:absolute;top:547.87px;font-family:'Liberation Sans';font-size:11.5px;line-height:11.5px;font-weight:normal;color:#111;white-space:pre;-webkit-text-stroke:0.25px #111;left:291.20px;">31/12/2019</div>
<div style="position:absolute;top:547.87px;font-family:'Liberation Sans';font-size:11.5px;line-height:11.5px;font-weight:normal;color:#111;white-space:pre;-webkit-text-stroke:0.25px #111;right:933.30px;">0,00</div>
<div style="position:absolute;top:547.87px;font-family:'Liberation Sans';font-size:11.5px;line-height:11.5px;font-weight:normal;color:#111;white-space:pre;-webkit-text-stroke:0.25px #111;right:845.30px;">0,00</div>
<div style="position:absolute;top:547.87px;font-family:'Liberation Sans';font-size:11.5px;line-height:11.5px;font-weight:normal;color:#111;white-space:pre;-webkit-text-stroke:0.25px #111;right:766.30px;">0,00</div>
<div style="position:absolute;top:547.87px;font-family:'Liberation Sans';font-size:11.5px;line-height:11.5px;font-weight:normal;color:#111;white-space:pre;-webkit-text-stroke:0.25px #111;right:680.30px;">0,00</div>
<div style="position:absolute;top:547.87px;font-family:'Liberation Sans';font-size:11.5px;line-height:11.5px;font-weight:normal;color:#111;white-space:pre;-webkit-text-stroke:0.25px #111;right:615.30px;">0,00</div>
<div style="position:absolute;top:547.87px;font-family:'Liberation Sans';font-size:11.5px;line-height:11.5px;font-weight:normal;color:#111;white-space:pre;-webkit-text-stroke:0.25px #111;right:526.30px;">0,00</div>
<div style="position:absolute;top:547.87px;font-family:'Liberation Sans';font-size:11.5px;line-height:11.5px;font-weight:normal;color:#111;white-space:pre;-webkit-text-stroke:0.25px #111;right:448.30px;">0,00</div>
<div style="position:absolute;top:547.87px;font-family:'Liberation Sans';font-size:11.5px;line-height:11.5px;font-weight:normal;color:#111;white-space:pre;-webkit-text-stroke:0.25px #111;right:379.30px;">0,00</div>
<div style="position:absolute;top:547.87px;font-family:'Liberation Sans';font-size:11.5px;line-height:11.5px;font-weight:normal;color:#111;white-space:pre;-webkit-text-stroke:0.25px #111;right:299.30px;">0,00</div>
<div style="position:absolute;top:547.87px;font-family:'Liberation Sans';font-size:11.5px;line-height:11.5px;font-weight:normal;color:#111;white-space:pre;-webkit-text-stroke:0.25px #111;right:217.30px;">0,00</div>
<div style="position:absolute;top:547.87px;font-family:'Liberation Sans';font-size:11.5px;line-height:11.5px;font-weight:normal;color:#111;white-space:pre;-webkit-text-stroke:0.25px #111;right:130.30px;">0,00</div>
<div style="position:absolute;top:547.87px;font-family:'Liberation Sans';font-size:11.5px;line-height:11.5px;font-weight:normal;color:#111;white-space:pre;-webkit-text-stroke:0.25px #111;right:29.80px;">0,00</div>
<div style="position:absolute;top:547.87px;font-family:'Liberation Sans';font-size:11.5px;line-height:11.5px;font-weight:normal;color:#111;white-space:pre;-webkit-text-stroke:0.25px #111;left:1320.30px;transform:scaleX(0.6840);transform-origin:0 0;">%</div>
<div style="position:absolute;top:576.12px;font-family:'Liberation Sans';font-size:11.2px;line-height:11.2px;font-weight:normal;color:#111;white-space:pre;-webkit-text-stroke:0.25px #111;left:27.70px;transform:scaleX(0.9822);transform-origin:0 0;">PréTestes_Controle</div>
<div style="position:absolute;top:571.87px;font-family:'Liberation Sans';font-size:11.5px;line-height:11.5px;font-weight:normal;color:#111;white-space:pre;-webkit-text-stroke:0.25px #111;left:225.00px;">01/03/2019</div>
<div style="position:absolute;top:571.87px;font-family:'Liberation Sans';font-size:11.5px;line-height:11.5px;font-weight:normal;color:#111;white-space:pre;-webkit-text-stroke:0.25px #111;left:291.20px;">31/12/2019</div>
<div style="position:absolute;top:571.87px;font-family:'Liberation Sans';font-size:11.5px;line-height:11.5px;font-weight:normal;color:#111;white-space:pre;-webkit-text-stroke:0.25px #111;right:933.30px;">0,00</div>
<div style="position:absolute;top:571.87px;font-family:'Liberation Sans';font-size:11.5px;line-height:11.5px;font-weight:normal;color:#111;white-space:pre;-webkit-text-stroke:0.25px #111;right:845.30px;">0,00</div>
<div style="position:absolute;top:571.87px;font-family:'Liberation Sans';font-size:11.5px;line-height:11.5px;font-weight:normal;color:#111;white-space:pre;-webkit-text-stroke:0.25px #111;right:766.30px;">0,00</div>
<div style="position:absolute;top:571.87px;font-family:'Liberation Sans';font-size:11.5px;line-height:11.5px;font-weight:normal;color:#111;white-space:pre;-webkit-text-stroke:0.25px #111;right:680.30px;">0,00</div>
<div style="position:absolute;top:571.87px;font-family:'Liberation Sans';font-size:11.5px;line-height:11.5px;font-weight:normal;color:#111;white-space:pre;-webkit-text-stroke:0.25px #111;right:615.30px;">0,00</div>
<div style="position:absolute;top:571.87px;font-family:'Liberation Sans';font-size:11.5px;line-height:11.5px;font-weight:normal;color:#111;white-space:pre;-webkit-text-stroke:0.25px #111;right:526.30px;">0,00</div>
<div style="position:absolute;top:571.87px;font-family:'Liberation Sans';font-size:11.5px;line-height:11.5px;font-weight:normal;color:#111;white-space:pre;-webkit-text-stroke:0.25px #111;right:448.30px;">0,00</div>
<div style="position:absolute;top:571.87px;font-family:'Liberation Sans';font-size:11.5px;line-height:11.5px;font-weight:normal;color:#111;white-space:pre;-webkit-text-stroke:0.25px #111;right:379.30px;">0,00</div>
<div style="position:absolute;top:571.87px;font-family:'Liberation Sans';font-size:11.5px;line-height:11.5px;font-weight:normal;color:#111;white-space:pre;-webkit-text-stroke:0.25px #111;right:299.30px;">0,00</div>
<div style="position:absolute;top:571.87px;font-family:'Liberation Sans';font-size:11.5px;line-height:11.5px;font-weight:normal;color:#111;white-space:pre;-webkit-text-stroke:0.25px #111;right:217.30px;">0,00</div>
<div style="position:absolute;top:571.87px;font-family:'Liberation Sans';font-size:11.5px;line-height:11.5px;font-weight:normal;color:#111;white-space:pre;-webkit-text-stroke:0.25px #111;right:130.30px;">0,00</div>
<div style="position:absolute;top:571.87px;font-family:'Liberation Sans';font-size:11.5px;line-height:11.5px;font-weight:normal;color:#111;white-space:pre;-webkit-text-stroke:0.25px #111;right:29.80px;">0,00</div>
<div style="position:absolute;top:571.87px;font-family:'Liberation Sans';font-size:11.5px;line-height:11.5px;font-weight:normal;color:#111;white-space:pre;-webkit-text-stroke:0.25px #111;left:1320.30px;transform:scaleX(0.6840);transform-origin:0 0;">%</div>
<div style="position:absolute;top:600.12px;font-family:'Liberation Sans';font-size:11.2px;line-height:11.2px;font-weight:normal;color:#111;white-space:pre;-webkit-text-stroke:0.25px #111;left:27.70px;transform:scaleX(0.9737);transform-origin:0 0;">PréTestes_Proteção</div>
<div style="position:absolute;top:595.87px;font-family:'Liberation Sans';font-size:11.5px;line-height:11.5px;font-weight:normal;color:#111;white-space:pre;-webkit-text-stroke:0.25px #111;left:225.00px;">01/03/2019</div>
<div style="position:absolute;top:595.87px;font-family:'Liberation Sans';font-size:11.5px;line-height:11.5px;font-weight:normal;color:#111;white-space:pre;-webkit-text-stroke:0.25px #111;left:291.20px;">31/12/2019</div>
<div style="position:absolute;top:595.87px;font-family:'Liberation Sans';font-size:11.5px;line-height:11.5px;font-weight:normal;color:#111;white-space:pre;-webkit-text-stroke:0.25px #111;right:933.30px;">0,00</div>
<div style="position:absolute;top:595.87px;font-family:'Liberation Sans';font-size:11.5px;line-height:11.5px;font-weight:normal;color:#111;white-space:pre;-webkit-text-stroke:0.25px #111;right:845.30px;">0,00</div>
<div style="position:absolute;top:595.87px;font-family:'Liberation Sans';font-size:11.5px;line-height:11.5px;font-weight:normal;color:#111;white-space:pre;-webkit-text-stroke:0.25px #111;right:766.30px;">0,00</div>
<div style="position:absolute;top:595.87px;font-family:'Liberation Sans';font-size:11.5px;line-height:11.5px;font-weight:normal;color:#111;white-space:pre;-webkit-text-stroke:0.25px #111;right:680.30px;">0,00</div>
<div style="position:absolute;top:595.87px;font-family:'Liberation Sans';font-size:11.5px;line-height:11.5px;font-weight:normal;color:#111;white-space:pre;-webkit-text-stroke:0.25px #111;right:615.30px;">0,00</div>
<div style="position:absolute;top:595.87px;font-family:'Liberation Sans';font-size:11.5px;line-height:11.5px;font-weight:normal;color:#111;white-space:pre;-webkit-text-stroke:0.25px #111;right:526.30px;">0,00</div>
<div style="position:absolute;top:595.87px;font-family:'Liberation Sans';font-size:11.5px;line-height:11.5px;font-weight:normal;color:#111;white-space:pre;-webkit-text-stroke:0.25px #111;right:448.30px;">0,00</div>
<div style="position:absolute;top:595.87px;font-family:'Liberation Sans';font-size:11.5px;line-height:11.5px;font-weight:normal;color:#111;white-space:pre;-webkit-text-stroke:0.25px #111;right:379.30px;">0,00</div>
<div style="position:absolute;top:595.87px;font-family:'Liberation Sans';font-size:11.5px;line-height:11.5px;font-weight:normal;color:#111;white-space:pre;-webkit-text-stroke:0.25px #111;right:299.30px;">0,00</div>
<div style="position:absolute;top:595.87px;font-family:'Liberation Sans';font-size:11.5px;line-height:11.5px;font-weight:normal;color:#111;white-space:pre;-webkit-text-stroke:0.25px #111;right:217.30px;">0,00</div>
<div style="position:absolute;top:595.87px;font-family:'Liberation Sans';font-size:11.5px;line-height:11.5px;font-weight:normal;color:#111;white-space:pre;-webkit-text-stroke:0.25px #111;right:130.30px;">0,00</div>
<div style="position:absolute;top:595.87px;font-family:'Liberation Sans';font-size:11.5px;line-height:11.5px;font-weight:normal;color:#111;white-space:pre;-webkit-text-stroke:0.25px #111;right:29.80px;">0,00</div>
<div style="position:absolute;top:595.87px;font-family:'Liberation Sans';font-size:11.5px;line-height:11.5px;font-weight:normal;color:#111;white-space:pre;-webkit-text-stroke:0.25px #111;left:1320.30px;transform:scaleX(0.6840);transform-origin:0 0;">%</div>
<div style="position:absolute;top:624.12px;font-family:'Liberation Sans';font-size:11.2px;line-height:11.2px;font-weight:normal;color:#111;white-space:pre;-webkit-text-stroke:0.25px #111;left:27.70px;transform:scaleX(0.9664);transform-origin:0 0;">TAF_Controle</div>
<div style="position:absolute;top:619.87px;font-family:'Liberation Sans';font-size:11.5px;line-height:11.5px;font-weight:normal;color:#111;white-space:pre;-webkit-text-stroke:0.25px #111;left:225.00px;">01/03/2019</div>
<div style="position:absolute;top:619.87px;font-family:'Liberation Sans';font-size:11.5px;line-height:11.5px;font-weight:normal;color:#111;white-space:pre;-webkit-text-stroke:0.25px #111;left:291.20px;">31/12/2019</div>
<div style="position:absolute;top:619.87px;font-family:'Liberation Sans';font-size:11.5px;line-height:11.5px;font-weight:normal;color:#111;white-space:pre;-webkit-text-stroke:0.25px #111;right:933.30px;">0,00</div>
<div style="position:absolute;top:619.87px;font-family:'Liberation Sans';font-size:11.5px;line-height:11.5px;font-weight:normal;color:#111;white-space:pre;-webkit-text-stroke:0.25px #111;right:845.30px;">0,00</div>
<div style="position:absolute;top:619.87px;font-family:'Liberation Sans';font-size:11.5px;line-height:11.5px;font-weight:normal;color:#111;white-space:pre;-webkit-text-stroke:0.25px #111;right:766.30px;">0,00</div>
<div style="position:absolute;top:619.87px;font-family:'Liberation Sans';font-size:11.5px;line-height:11.5px;font-weight:normal;color:#111;white-space:pre;-webkit-text-stroke:0.25px #111;right:680.30px;">0,00</div>
<div style="position:absolute;top:619.87px;font-family:'Liberation Sans';font-size:11.5px;line-height:11.5px;font-weight:normal;color:#111;white-space:pre;-webkit-text-stroke:0.25px #111;right:615.30px;">0,00</div>
<div style="position:absolute;top:619.87px;font-family:'Liberation Sans';font-size:11.5px;line-height:11.5px;font-weight:normal;color:#111;white-space:pre;-webkit-text-stroke:0.25px #111;right:526.30px;">0,00</div>
<div style="position:absolute;top:619.87px;font-family:'Liberation Sans';font-size:11.5px;line-height:11.5px;font-weight:normal;color:#111;white-space:pre;-webkit-text-stroke:0.25px #111;right:448.30px;">0,00</div>
<div style="position:absolute;top:619.87px;font-family:'Liberation Sans';font-size:11.5px;line-height:11.5px;font-weight:normal;color:#111;white-space:pre;-webkit-text-stroke:0.25px #111;right:379.30px;">0,00</div>
<div style="position:absolute;top:619.87px;font-family:'Liberation Sans';font-size:11.5px;line-height:11.5px;font-weight:normal;color:#111;white-space:pre;-webkit-text-stroke:0.25px #111;right:299.30px;">0,00</div>
<div style="position:absolute;top:619.87px;font-family:'Liberation Sans';font-size:11.5px;line-height:11.5px;font-weight:normal;color:#111;white-space:pre;-webkit-text-stroke:0.25px #111;right:217.30px;">0,00</div>
<div style="position:absolute;top:619.87px;font-family:'Liberation Sans';font-size:11.5px;line-height:11.5px;font-weight:normal;color:#111;white-space:pre;-webkit-text-stroke:0.25px #111;right:130.30px;">0,00</div>
<div style="position:absolute;top:619.87px;font-family:'Liberation Sans';font-size:11.5px;line-height:11.5px;font-weight:normal;color:#111;white-space:pre;-webkit-text-stroke:0.25px #111;right:29.80px;">0,00</div>
<div style="position:absolute;top:619.87px;font-family:'Liberation Sans';font-size:11.5px;line-height:11.5px;font-weight:normal;color:#111;white-space:pre;-webkit-text-stroke:0.25px #111;left:1320.30px;transform:scaleX(0.6840);transform-origin:0 0;">%</div></body></html>
